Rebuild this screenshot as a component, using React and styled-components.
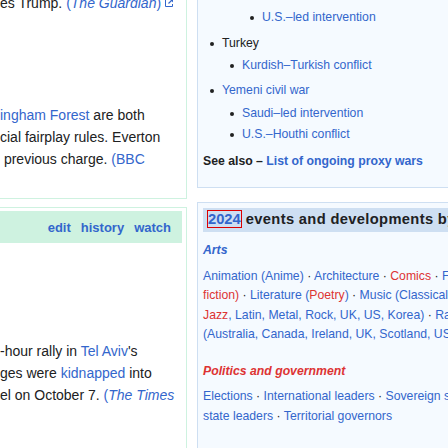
import styled, { createGlobalStyle } from "styled-components";

const GlobalStyle = createGlobalStyle`
  body {
    margin: 0;
    overflow: hidden;
    background: #fff;
    font-family: "Liberation Sans", Arial, sans-serif;
    color: #202122;
  }
`;

const Page = styled.div`
  display: flex;
  align-items: flex-start;
  gap: 10px;
  margin: -20px 0 0 -30px;
`;

const Column = styled.div`
  flex: none;
  width: ${(p) => p.$width}px;
  display: flex;
  flex-direction: column;
  gap: ${(p) => p.$gap}px;
`;

/* left: the day boxes */
const DayBox = styled.div`
  border: 1px solid #cef2e0;
  padding: 3px 4px ${(p) => p.$bottom}px 29px;
`;

const DayHeader = styled.div`
  height: 32px;
  background: #cef2e0;
  display: flex;
  justify-content: flex-end;
  align-items: center;
  gap: 10px;
  padding-right: 11px;
  font-size: 13px;
  font-weight: bold;
`;

const Story = styled.div`
  margin-top: ${(p) => p.$top || 0}px;
  font-size: 14px;
  line-height: 22px;
`;

const Line = styled.div`
  white-space: nowrap;
`;

const Link = styled.a`
  color: ${(p) => (p.$missing ? "#dd3333" : "#3366cc")};
  text-decoration: none;
  font-style: ${(p) => (p.$italic ? "italic" : "normal")};
`;

const ExtIcon = styled.svg`
  width: 10px;
  height: 10px;
  margin-left: 3px;
  vertical-align: 0;
`;

/* right: the portal boxes */
const PortalBox = styled.div`
  background: #f5faff;
  border: 1px solid #cedff2;
  border-right: none;
  padding: 5px 5px ${(p) => p.$bottom}px;
  font-size: 12.25px;
`;

const ConflictList = styled.ul`
  list-style: none;
  margin: 0;
  padding: 0;
`;

const Conflict = styled.li`
  display: flex;
  align-items: center;
  line-height: 21px;
  margin-top: ${(p) => p.$space || 0}px;
  padding-left: ${(p) => 7 + (p.$level - 1) * 20}px;
  white-space: nowrap;

  &::before {
    content: "";
    width: 4px;
    height: 4px;
    border-radius: 50%;
    background: #202122;
    margin-right: 8px;
    flex: none;
  }
`;

const SeeAlso = styled.p`
  margin: 6px 0 0;
  line-height: 20px;
  font-weight: bold;
  white-space: nowrap;
`;

const SideHeading = styled.div`
  height: 24px;
  line-height: 22px;
  background: #cedff2;
  padding: 0 4px;
  font-size: 14.7px;
  font-weight: bold;
  white-space: nowrap;
`;

const YearBox = styled.span`
  display: inline-block;
  border: 1px solid #dd0000;
  line-height: 16px;
  color: #3366cc;
  vertical-align: middle;
  margin-top: -3px;
`;

const HeadingText = styled.span`
  letter-spacing: 0.35px;
`;

const Topic = styled.div`
  margin-top: ${(p) => p.$top}px;
  line-height: 19.5px;
  font-weight: bold;
  font-style: italic;
  color: ${(p) => (p.$missing ? "#dd3333" : "#3366cc")};
`;

const Links = styled.div`
  margin-top: ${(p) => p.$top}px;
  line-height: 19.5px;
  white-space: nowrap;
`;

const Dot = () => <span> · </span>;

export default function App() {
  return (
    <>
      <GlobalStyle />
      <Page>
        <Column $width={217} $gap={8}>
          <DayBox $bottom={28}>
            <Story $top={8}>
              <Line>
                es Trump.{" "}
                <Link href="#">
                  (<Link $italic>The Guardian</Link>)
                </Link>
                <ExtIcon viewBox="0 0 10 10">
                  <path
                    d="M4 1.5H1.5v7h7V6"
                    fill="none"
                    stroke="#3366cc"
                    strokeWidth="1"
                  />
                  <path d="M5.5 1h3.5v3.5z" fill="#3366cc" />
                  <path d="M8.5 1.5 4.5 5.5" stroke="#3366cc" strokeWidth="1.2" />
                </ExtIcon>
              </Line>
            </Story>
            <Story $top={90}>
              <Line>
                <Link href="#">ingham Forest</Link> are both
              </Line>
              <Line>cial fairplay rules. Everton</Line>
              <Line>
                {"\u00a0"}previous charge. <Link href="#">(BBC</Link>
              </Line>
            </Story>
          </DayBox>

          <DayBox $bottom={120}>
            <DayHeader>
              <Link href="#">edit</Link>
              <Link href="#">history</Link>
              <Link href="#">watch</Link>
            </DayHeader>
            <Story $top={97}>
              <Line>
                -hour rally in <Link href="#">Tel Aviv</Link>'s
              </Line>
              <Line>
                ges were <Link href="#">kidnapped</Link> into
              </Line>
              <Line>
                el on October 7.{" "}
                <Link href="#">
                  (<Link $italic>The Times</Link>
                </Link>
              </Line>
            </Story>
          </DayBox>
        </Column>

        <Column $width={330} $gap={14}>
          <PortalBox $bottom={16}>
            <ConflictList>
              <Conflict $level={3}>
                <Link href="#">Turkish intervention</Link>
              </Conflict>
              <Conflict $level={3}>
                <Link href="#">U.S.–led intervention</Link>
              </Conflict>
              <Conflict $level={1} $space={5}>
                Turkey
              </Conflict>
              <Conflict $level={2} $space={1}>
                <Link href="#">Kurdish–Turkish conflict</Link>
              </Conflict>
              <Conflict $level={1} $space={4}>
                <Link href="#">Yemeni civil war</Link>
              </Conflict>
              <Conflict $level={2} $space={2}>
                <Link href="#">Saudi–led intervention</Link>
              </Conflict>
              <Conflict $level={2}>
                <Link href="#">U.S.–Houthi conflict</Link>
              </Conflict>
            </ConflictList>
            <SeeAlso>
              See also – <Link href="#">List of ongoing proxy wars</Link>
            </SeeAlso>
          </PortalBox>

          <PortalBox $bottom={40}>
            <SideHeading>
              <YearBox>2024</YearBox>{" "}
              <HeadingText>events and developments by topic</HeadingText>
            </SideHeading>
            <Topic $top={9}>Arts</Topic>
            <Links $top={6}>
              <div>
                <Link href="#">Animation (Anime)</Link>
                <Dot />
                <Link href="#">Architecture</Link>
                <Dot />
                <Link href="#" $missing>
                  Comics
                </Link>
                <Dot />
                <Link href="#">Fiction (Science</Link>
              </div>
              <div>
                <Link href="#" $missing>
                  fiction)
                </Link>
                <Dot />
                <Link href="#">Literature (</Link>
                <Link href="#" $missing>
                  Poetry
                </Link>
                <Link href="#">)</Link>
                <Dot />
                <Link href="#">Music (Classical,</Link>
              </div>
              <div>
                <Link href="#" $missing>
                  Jazz
                </Link>
                <Link href="#">, Latin, Metal, Rock, UK, US, Korea)</Link>
                <Dot />
                <Link href="#">Radio</Link>
              </div>
              <div>
                <Link href="#">(Australia, Canada, Ireland, UK, Scotland, US)</Link>
              </div>
            </Links>
            <Topic $top={17} $missing>
              Politics and government
            </Topic>
            <Links $top={6}>
              <div>
                <Link href="#">Elections</Link>
                <Dot />
                <Link href="#">International leaders</Link>
                <Dot />
                <Link href="#">Sovereign states</Link>
              </div>
              <div>
                <Link href="#">state leaders</Link>
                <Dot />
                <Link href="#">Territorial governors</Link>
              </div>
            </Links>
          </PortalBox>
        </Column>
      </Page>
    </>
  );
}
